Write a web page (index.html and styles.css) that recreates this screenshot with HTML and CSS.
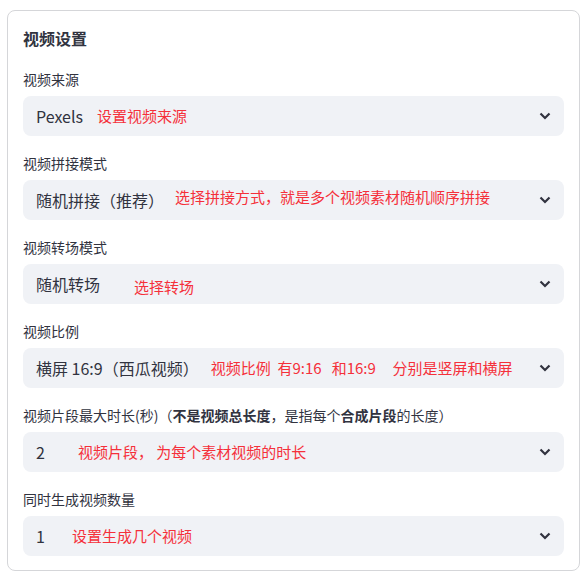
FILE: index.html
```html
<!DOCTYPE html>
<html lang="zh">
<head>
<meta charset="utf-8">
<title>视频设置</title>
<link rel="stylesheet" href="styles.css">
</head>
<body>
<div class="card">
  <h3 class="title">视频设置</h3>

  <div class="field">
    <label class="label">视频来源</label>
    <div class="select">
      <span class="value">Pexels</span>
      <span class="note n1">设置视频来源</span>
      <svg class="chev" width="12" height="8" viewBox="0 0 12 8"><path d="M1.5 1.5 6 6 10.5 1.5" fill="none" stroke="#31333f" stroke-width="2.2"/></svg>
    </div>
  </div>

  <div class="field">
    <label class="label">视频拼接模式</label>
    <div class="select">
      <span class="value">随机拼接（推荐）</span>
      <span class="note n2">选择拼接方式，就是多个视频素材随机顺序拼接</span>
      <svg class="chev" width="12" height="8" viewBox="0 0 12 8"><path d="M1.5 1.5 6 6 10.5 1.5" fill="none" stroke="#31333f" stroke-width="2.2"/></svg>
    </div>
  </div>

  <div class="field">
    <label class="label">视频转场模式</label>
    <div class="select">
      <span class="value">随机转场</span>
      <span class="note n3">选择转场</span>
      <svg class="chev" width="12" height="8" viewBox="0 0 12 8"><path d="M1.5 1.5 6 6 10.5 1.5" fill="none" stroke="#31333f" stroke-width="2.2"/></svg>
    </div>
  </div>

  <div class="field">
    <label class="label">视频比例</label>
    <div class="select">
      <span class="value">横屏 16:9（西瓜视频）</span>
      <span class="note n4">视频比例  有9:16   和16:9     分别是竖屏和横屏</span>
      <svg class="chev" width="12" height="8" viewBox="0 0 12 8"><path d="M1.5 1.5 6 6 10.5 1.5" fill="none" stroke="#31333f" stroke-width="2.2"/></svg>
    </div>
  </div>

  <div class="field">
    <label class="label">视频片段最大时长(秒)（<b>不是视频总长度</b>，是指每个<b>合成片段</b>的长度）</label>
    <div class="select">
      <span class="value">2</span>
      <span class="note n5">视频片段， 为每个素材视频的时长</span>
      <svg class="chev" width="12" height="8" viewBox="0 0 12 8"><path d="M1.5 1.5 6 6 10.5 1.5" fill="none" stroke="#31333f" stroke-width="2.2"/></svg>
    </div>
  </div>

  <div class="field">
    <label class="label">同时生成视频数量</label>
    <div class="select">
      <span class="value">1</span>
      <span class="note n6">设置生成几个视频</span>
      <svg class="chev" width="12" height="8" viewBox="0 0 12 8"><path d="M1.5 1.5 6 6 10.5 1.5" fill="none" stroke="#31333f" stroke-width="2.2"/></svg>
    </div>
  </div>
</div>
</body>
</html>
```

FILE: styles.css
```css
* { box-sizing: border-box; }
html, body { background: #ffffff; }
body {
  margin: 0;
  font-family: "Noto Sans CJK SC", "Noto Sans", sans-serif;
  color: #31333f;
}
.card {
  margin: 10px 3px 0 7px;
  border: 1px solid #d5d6d9;
  border-radius: 8px;
  padding: 15px 15px 14px 15px;
  display: flex;
  flex-direction: column;
  gap: 16px;
}
.title {
  margin: 0 0 2px 0;
  font-size: 16px;
  font-weight: 700;
  line-height: 24px;
  height: 24px;
}
.field {
  display: flex;
  flex-direction: column;
  gap: 6px;
}
.label {
  font-size: 14px;
  line-height: 22px;
  height: 22px;
  color: #31333f;
}
.label b { font-weight: 700; }
.select {
  height: 40px;
  background: #f0f2f6;
  border-radius: 8px;
  display: flex;
  align-items: center;
  padding: 0 14px 0 13px;
}
.value {
  font-size: 16px;
  line-height: 24px;
  white-space: nowrap;
}
.note {
  color: #f5303a;
  font-size: 15px;
  line-height: 22px;
  white-space: pre;
}
.n1 { margin-left: 14px; }
.n2 { margin-left: 11px; position: relative; top: -3px; }
.n3 { margin-left: 34px; position: relative; top: 3px; }
.n4 { margin-left: 12px; }
.n5 { margin-left: 33px; }
.n6 { margin-left: 27px; }
.chev {
  margin-left: auto;
  margin-right: -1px;
  flex: none;
}
```
